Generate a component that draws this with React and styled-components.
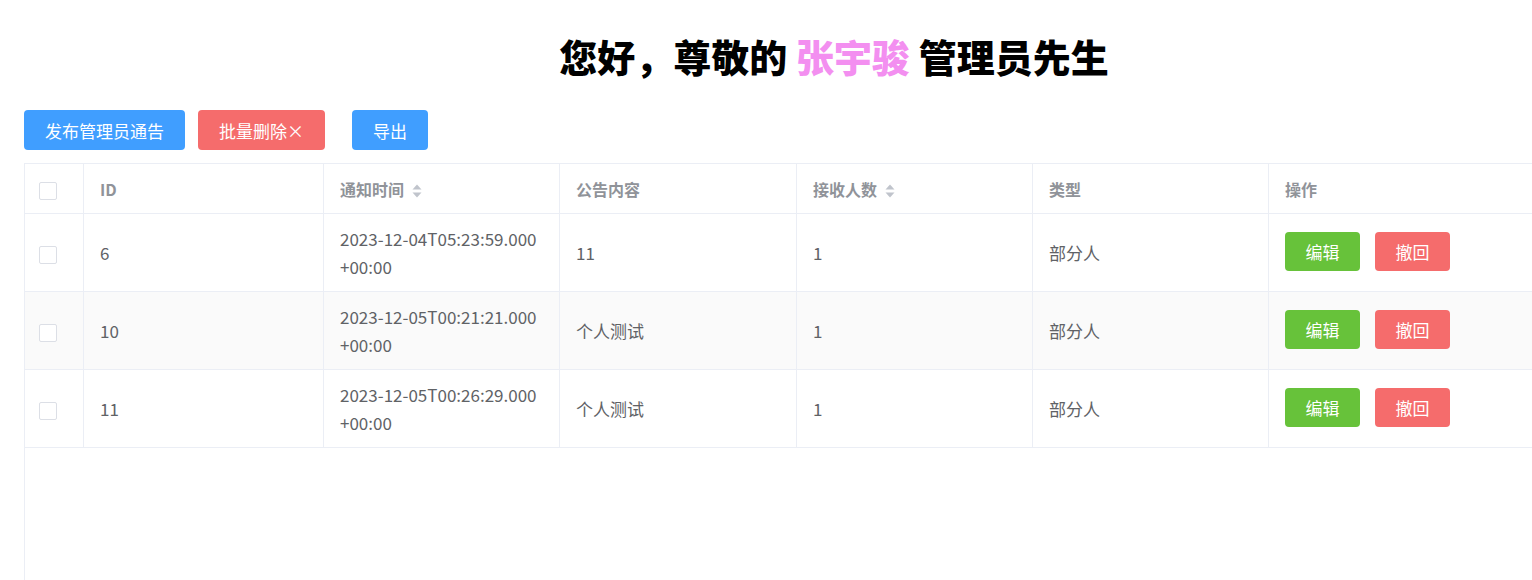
import styled, { createGlobalStyle } from "styled-components";

const GlobalStyle = createGlobalStyle`
    body {
        margin: 0;
        background: #ffffff;
        overflow: hidden;
        font-family: "Noto Sans CJK SC", "Noto Sans", sans-serif;
    }
`

const rows = [
    { id: 6, time: "2023-12-04T05:23:59.000", zone: "+00:00", content: "11", count: 1, type: "部分人" },
    { id: 10, time: "2023-12-05T00:21:21.000", zone: "+00:00", content: "个人测试", count: 1, type: "部分人" },
    { id: 11, time: "2023-12-05T00:26:29.000", zone: "+00:00", content: "个人测试", count: 1, type: "部分人" },
]

const widths = [59, 240, 236, 237, 236, 236, 376]

function SortCaret() {
    return (
        <Caret viewBox="0 0 10 14" width="10" height="14">
            <path d="M5 0.5 L9.5 5.5 L0.5 5.5 Z" fill="#c0c4cc" />
            <path d="M5 13.5 L9.5 8.5 L0.5 8.5 Z" fill="#c0c4cc" />
        </Caret>
    )
}

export default function App() {
    return (
        <Page>
            <GlobalStyle />
            <Title>您好，尊敬的 <Name>张宇骏</Name> 管理员先生</Title>
            <Toolbar>
                <Button $color="#409eff">发布管理员通告</Button>
                <Button $color="#f56c6c">批量删除×</Button>
                <Button $color="#409eff" $gap="14px">导出</Button>
            </Toolbar>
            <TableWrap>
                <Table>
                    <colgroup>
                        {widths.map((w, i) => <col key={i} style={{ width: w }} />)}
                    </colgroup>
                    <thead>
                        <tr>
                            <Th><Check /></Th>
                            <Th>ID</Th>
                            <Th>通知时间 <SortCaret /></Th>
                            <Th>公告内容</Th>
                            <Th>接收人数 <SortCaret /></Th>
                            <Th>类型</Th>
                            <Th>操作</Th>
                        </tr>
                    </thead>
                    <tbody>
                        {rows.map((r, i) => (
                            <Tr key={r.id} $striped={i % 2 === 1}>
                                <Td><Check /></Td>
                                <Td>{r.id}</Td>
                                <Td>{r.time}<br />{r.zone}</Td>
                                <Td>{r.content}</Td>
                                <Td>{r.count}</Td>
                                <Td>{r.type}</Td>
                                <Td>
                                    <Actions>
                                        <SmallButton $color="#67c23a">编辑</SmallButton>
                                        <SmallButton $color="#f56c6c">撤回</SmallButton>
                                    </Actions>
                                </Td>
                            </Tr>
                        ))}
                    </tbody>
                </Table>
            </TableWrap>
        </Page>
    )
}

const Page = styled.div`
    width: 1620px;
    padding-left: 24px;
`

const Title = styled.h1`
    margin: 0;
    padding-top: 29px;
    line-height: 54px;
    font-size: 38px;
    font-weight: 900;
    text-align: center;
    color: #000;
`

const Name = styled.span`
    color: #f38ff0;
`

const Toolbar = styled.div`
    display: flex;
    gap: 13px;
    margin-top: 27px;
`

const Button = styled.button`
    height: 40px;
    padding: 0 21px;
    margin-left: ${p => p.$gap || 0};
    border: none;
    border-radius: 4px;
    background: ${p => p.$color};
    color: #fff;
    font-family: inherit;
    font-size: 17px;
`

const TableWrap = styled.div`
    margin-top: 13px;
    height: 420px;
    border-left: 1px solid #ebeef5;
    border-top: 1px solid #ebeef5;
`

const Table = styled.table`
    border-collapse: collapse;
    table-layout: fixed;
    width: 1596px;
    margin-left: -1px;
`

const Th = styled.th`
    height: 49px;
    padding: 0 16px;
    border: 1px solid #ebeef5;
    border-top: none;
    text-align: left;
    font-size: 16px;
    font-weight: 700;
    color: #909399;
    white-space: nowrap;
    &:first-child {
        padding: 0 14px;
    }
`

const Tr = styled.tr`
    background: ${p => p.$striped ? "#fafafa" : "#fff"};
`

const Td = styled.td`
    height: 77px;
    padding: 0 16px;
    border: 1px solid #ebeef5;
    font-size: 17px;
    line-height: 28px;
    color: #606266;
    &:first-child {
        padding: 0 14px;
    }
`

const Check = styled.span`
    display: inline-block;
    width: 16px;
    height: 16px;
    border: 1px solid #dcdfe6;
    border-radius: 2px;
    background: #fff;
    vertical-align: middle;
`

const Caret = styled.svg`
    vertical-align: -2px;
    margin-left: 4px;
`

const Actions = styled.div`
    display: flex;
    gap: 15px;
`

const SmallButton = styled.button`
    height: 39px;
    width: 75px;
    margin-top: -2px;
    border: none;
    border-radius: 4px;
    background: ${p => p.$color};
    color: #fff;
    font-family: inherit;
    font-size: 17px;
`
